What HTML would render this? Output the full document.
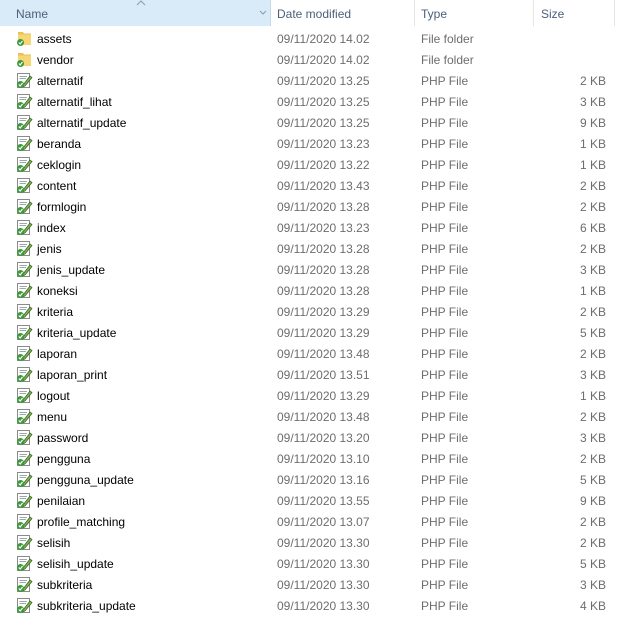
<!DOCTYPE html>
<html><head><meta charset="utf-8"><style>
body{margin:0;width:625px;height:625px;background:#fff;font-family:"Liberation Sans",sans-serif;font-size:12px;overflow:hidden;position:relative}
.hdr{position:absolute;top:0;left:0;width:625px;height:27px;background:#fff}
.hn{position:absolute;left:0;top:0;width:270px;height:26px;background:#d9ebf9}
.ht{position:absolute;top:7px;color:#4c607a}
.div{position:absolute;top:0;width:1px;height:26px;background:#e5e5e5}
.row{position:absolute;left:0;width:625px;height:21px}
.row span{position:absolute;top:4px;white-space:nowrap}
.n{left:37px;color:#000}
.d{left:277px;color:#6d6d6d}
.t{left:421px;color:#6d6d6d}
.s{right:19px;color:#6d6d6d}
.ic{position:absolute;left:16px;top:2px}
</style></head><body>
<div class="hdr">
<div class="hn"></div>
<div class="ht" style="left:16px">Name</div>
<svg style="position:absolute;left:136px;top:0" width="10" height="6"><path d="M1 5 L5 1 L9 5" fill="none" stroke="#8a9bb0"/></svg>
<svg style="position:absolute;left:259px;top:10px" width="8" height="6"><path d="M1 1 L4 4 L7 1" fill="none" stroke="#8a9bb0"/></svg>
<div class="div" style="left:270px;background:#c5d9ea"></div>
<div class="ht" style="left:277px">Date modified</div>
<div class="div" style="left:414px"></div>
<div class="ht" style="left:421px">Type</div>
<div class="div" style="left:533px"></div>
<div class="ht" style="left:541px">Size</div>
<div class="div" style="left:614px"></div>
</div>
<div id="rows"></div>
<script>
var data=[["assets","14.02","F",""],["vendor","14.02","F",""],["alternatif","13.25","P","2"],["alternatif_lihat","13.25","P","3"],["alternatif_update","13.25","P","9"],["beranda","13.23","P","1"],["ceklogin","13.22","P","1"],["content","13.43","P","2"],["formlogin","13.28","P","2"],["index","13.23","P","6"],["jenis","13.28","P","2"],["jenis_update","13.28","P","3"],["koneksi","13.28","P","1"],["kriteria","13.29","P","2"],["kriteria_update","13.29","P","5"],["laporan","13.48","P","2"],["laporan_print","13.51","P","3"],["logout","13.29","P","1"],["menu","13.48","P","2"],["password","13.20","P","3"],["pengguna","13.10","P","2"],["pengguna_update","13.16","P","5"],["penilaian","13.55","P","9"],["profile_matching","13.07","P","2"],["selisih","13.30","P","2"],["selisih_update","13.30","P","5"],["subkriteria","13.30","P","3"],["subkriteria_update","13.30","P","4"]];
var check='<circle cx="4.5" cy="12.5" r="3.5" fill="#3a9a3a"/><path d="M2.8 12.5 L4.2 14 L6.5 11" fill="none" stroke="#fff" stroke-width="1.2"/>';
var folder='<svg class="ic" width="17" height="17"><path d="M2 2 H7 L8 3.5 H15 V15 H2 Z" fill="#e8c15a"/><rect x="2" y="4.5" width="13" height="10.5" fill="#f7d675"/>'+check+'</svg>';
var php='<svg class="ic" width="17" height="17"><rect x="1.5" y="1.5" width="12" height="14" fill="#fff" stroke="#8a8a8a"/><path d="M3.5 4.5H11M3.5 6.5H10" stroke="#9aa" /><path d="M7 13 L14 4 L16 5.5 L9 14 L6.5 15 Z" fill="#7ab648" stroke="#3a5a2a" stroke-width=".7"/>'+check+'</svg>';
var h='';
data.forEach(function(r,i){
h+='<div class="row" style="top:'+(28+21*i)+'px">'+(r[2]=="F"?folder:php)+'<span class="n">'+r[0]+'</span><span class="d">09/11/2020 '+r[1]+'</span><span class="t">'+(r[2]=="F"?"File folder":"PHP File")+'</span>'+(r[3]?'<span class="s">'+r[3]+' KB</span>':'')+'</div>';
});
document.getElementById('rows').innerHTML=h;
</script>
</body></html>
